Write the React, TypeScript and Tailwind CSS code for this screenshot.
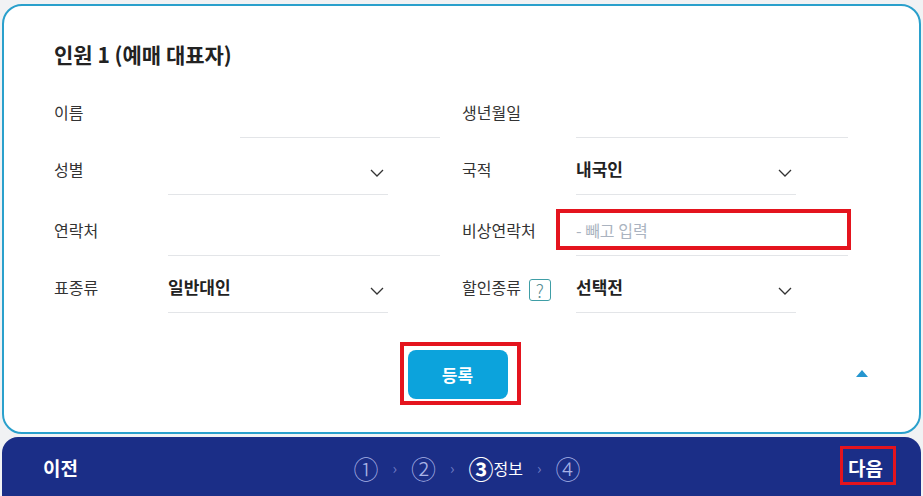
import React from "react";

const font = { fontFamily: '"Noto Sans CJK KR", "Noto Sans", sans-serif' };

function Chevron() {
  return (
    <svg width="14" height="8" viewBox="0 0 14 8" className="shrink-0">
      <path d="M1 1 L7 7 L13 1" fill="none" stroke="#333" strokeWidth="1.3" />
    </svg>
  );
}

function Label({ children }: { children: React.ReactNode }) {
  return (
    <div className="w-[114px] h-[44px] pb-[8px] flex items-center text-[16px] text-[#333] shrink-0">
      {children}
    </div>
  );
}

function SelectField({ value }: { value?: string }) {
  return (
    <div className="w-[220px] h-[44px] border-b border-[#e3e5e8] flex items-center justify-between pr-[4px]">
      <span className="text-[17px] font-bold text-[#222] -mt-[8px]">{value ?? ""}</span>
      <Chevron />
    </div>
  );
}

function InputField({ placeholder, short = false }: { placeholder?: string; short?: boolean }) {
  return (
    <div className="flex-1 flex justify-end">
      <div
        className={
          "h-[44px] border-b border-[#e3e5e8] flex items-center text-[16px] text-[#aab3c0] " +
          (short ? "w-[200px]" : "w-[272px]")
        }
      >
        <span className="mb-[8px]">{placeholder ?? ""}</span>
      </div>
    </div>
  );
}

export default function App() {
  return (
    <div className="w-[923px] h-[496px] overflow-hidden bg-[#f1f2f4] px-[2px] pt-[4px]" style={font}>
      <div className="h-[430px] rounded-[20px] border-2 border-[#2aa0cc] bg-white pl-[50px] pr-[70px] pt-[34px] relative">
        <h2 className="text-[21px] font-bold text-[#222] leading-[28px]">인원 1 (예매 대표자)</h2>

        <div className="mt-[26px] grid grid-cols-[408px_386px]">
          <div className="flex w-[386px]">
            <Label>이름</Label>
            <InputField short />
          </div>
          <div className="flex">
            <Label>생년월일</Label>
            <InputField />
          </div>

          <div className="flex mt-[13px]">
            <Label>성별</Label>
            <SelectField />
          </div>
          <div className="flex mt-[13px]">
            <Label>국적</Label>
            <SelectField value="내국인" />
          </div>

          <div className="flex mt-[17px] w-[386px]">
            <Label>연락처</Label>
            <InputField />
          </div>
          <div className="flex mt-[17px] relative">
            <Label>비상연락처</Label>
            <InputField placeholder="- 빼고 입력" />
            <div className="absolute left-[94px] top-[-3px] w-[295px] h-[41px] border-[4px] border-[#e4141e] pointer-events-none" />
          </div>

          <div className="flex mt-[13px]">
            <Label>표종류</Label>
            <SelectField value="일반대인" />
          </div>
          <div className="flex mt-[13px]">
            <div className="w-[114px] h-[44px] pb-[2px] flex items-center text-[16px] text-[#333] shrink-0">
              <span className="mb-[6px]">할인종류</span>
              <span className="ml-[8px] w-[22px] h-[22px] rounded-[3px] border-[1.5px] border-[#3f9ea6] flex items-center justify-center text-[18px] font-light text-[#5a8f95] leading-none">
                ?
              </span>
            </div>
            <SelectField value="선택전" />
          </div>
        </div>

        <div className="mt-[37px] flex justify-center -ml-[54px] -mr-[70px] pr-[4px]">
          <div className="relative">
            <button className="w-[100px] h-[49px] rounded-[8px] bg-[#0ca3dc] text-white font-bold text-[17px]">
              등록
            </button>
            <div className="absolute left-[-8px] top-[-8px] w-[121px] h-[63px] border-[4px] border-[#e4141e] pointer-events-none" />
          </div>
        </div>

        <svg width="12" height="7" viewBox="0 0 12 7" className="absolute right-[51px] top-[364px]">
          <path d="M0 7 L6 0 L12 7 Z" fill="#2596cf" />
        </svg>
      </div>

      <div className="mt-[3px] h-[62px] rounded-t-[16px] bg-[#1b2e87] flex items-center justify-between pl-[41px] pr-[38px]">
        <span className="text-white font-bold text-[19px]">이전</span>
        <div className="flex items-center gap-[14px] text-[#a8b2e6] ml-[8px]">
          <span className="text-[25px] font-light leading-none">①</span>
          <span className="text-[15px] text-[#6f7cc4]">›</span>
          <span className="text-[25px] font-light leading-none">②</span>
          <span className="text-[15px] text-[#6f7cc4]">›</span>
          <span className="flex items-center text-white">
            <span className="text-[25px] font-bold leading-none">③</span>
            <span className="text-[16px]">정보</span>
          </span>
          <span className="text-[15px] text-[#6f7cc4]">›</span>
          <span className="text-[25px] font-light leading-none">④</span>
        </div>
        <div className="relative">
          <span className="text-white font-bold text-[19px]">다음</span>
          <div className="absolute left-[-8px] top-[-8px] w-[56px] h-[39px] border-[3px] border-[#e4141e] pointer-events-none" />
        </div>
      </div>
    </div>
  );
}
